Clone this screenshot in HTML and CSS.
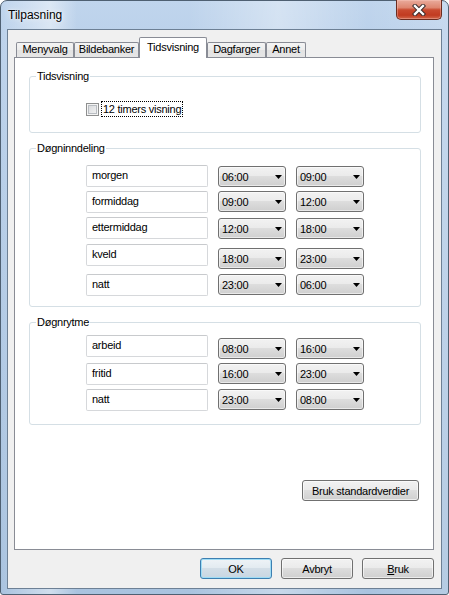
FILE: index.html
```html
<!DOCTYPE html>
<html lang="no">
<head>
<meta charset="utf-8">
<title>Tilpasning</title>
<link rel="stylesheet" href="styles.css">
</head>
<body>
<div class="window">
  <div class="titlebar">
    <span class="title">Tilpasning</span>
    <div class="close" aria-label="Lukk">
      <svg width="14" height="12" viewBox="0 0 14 12">
        <path d="M3 2 L11 10 M11 2 L3 10" stroke="#3a2b2b" stroke-width="4.4" stroke-linecap="square" fill="none"/>
        <path d="M3 2 L11 10 M11 2 L3 10" stroke="#ffffff" stroke-width="2.4" stroke-linecap="square" fill="none"/>
      </svg>
    </div>
  </div>
  <div class="frame">
    <div class="tabs">
      <div class="tab tab-meny">Menyvalg</div>
      <div class="tab tab-bilde">Bildebanker</div>
      <div class="tab tab-tid active">Tidsvisning</div>
      <div class="tab tab-dag">Dagfarger</div>
      <div class="tab tab-annet">Annet</div>
    </div>
    <div class="panel">
      <fieldset class="group group-first">
        <legend class="group-label">Tidsvisning</legend>
        <div class="check-row">
          <span class="checkbox"></span>
          <span class="check-label">12 timers visning</span>
        </div>
      </fieldset>

      <fieldset class="group">
        <legend class="group-label">Døgninndeling</legend>
        <div class="rows rows-day">
          <div class="row">
            <div class="field">morgen</div>
            <div class="combo off1"><span>06:00</span><svg class="arrow" width="7" height="4" viewBox="0 0 7 4"><path d="M0 0 H7 L3.5 4 Z" fill="#000"/></svg></div>
            <div class="combo off1"><span>09:00</span><svg class="arrow" width="7" height="4" viewBox="0 0 7 4"><path d="M0 0 H7 L3.5 4 Z" fill="#000"/></svg></div>
          </div>
          <div class="row">
            <div class="field">formiddag</div>
            <div class="combo"><span>09:00</span><svg class="arrow" width="7" height="4" viewBox="0 0 7 4"><path d="M0 0 H7 L3.5 4 Z" fill="#000"/></svg></div>
            <div class="combo"><span>12:00</span><svg class="arrow" width="7" height="4" viewBox="0 0 7 4"><path d="M0 0 H7 L3.5 4 Z" fill="#000"/></svg></div>
          </div>
          <div class="row">
            <div class="field">ettermiddag</div>
            <div class="combo off1"><span>12:00</span><svg class="arrow" width="7" height="4" viewBox="0 0 7 4"><path d="M0 0 H7 L3.5 4 Z" fill="#000"/></svg></div>
            <div class="combo off1"><span>18:00</span><svg class="arrow" width="7" height="4" viewBox="0 0 7 4"><path d="M0 0 H7 L3.5 4 Z" fill="#000"/></svg></div>
          </div>
          <div class="row row-shift">
            <div class="field">kveld</div>
            <div class="combo off4"><span>18:00</span><svg class="arrow" width="7" height="4" viewBox="0 0 7 4"><path d="M0 0 H7 L3.5 4 Z" fill="#000"/></svg></div>
            <div class="combo off4"><span>23:00</span><svg class="arrow" width="7" height="4" viewBox="0 0 7 4"><path d="M0 0 H7 L3.5 4 Z" fill="#000"/></svg></div>
          </div>
          <div class="row row-shift">
            <div class="field">natt</div>
            <div class="combo"><span>23:00</span><svg class="arrow" width="7" height="4" viewBox="0 0 7 4"><path d="M0 0 H7 L3.5 4 Z" fill="#000"/></svg></div>
            <div class="combo"><span>06:00</span><svg class="arrow" width="7" height="4" viewBox="0 0 7 4"><path d="M0 0 H7 L3.5 4 Z" fill="#000"/></svg></div>
          </div>
        </div>
      </fieldset>

      <fieldset class="group">
        <legend class="group-label">Døgnrytme</legend>
        <div class="rows rows-rhythm">
          <div class="row">
            <div class="field">arbeid</div>
            <div class="combo off3"><span>08:00</span><svg class="arrow" width="7" height="4" viewBox="0 0 7 4"><path d="M0 0 H7 L3.5 4 Z" fill="#000"/></svg></div>
            <div class="combo off3"><span>16:00</span><svg class="arrow" width="7" height="4" viewBox="0 0 7 4"><path d="M0 0 H7 L3.5 4 Z" fill="#000"/></svg></div>
          </div>
          <div class="row">
            <div class="field">fritid</div>
            <div class="combo"><span>16:00</span><svg class="arrow" width="7" height="4" viewBox="0 0 7 4"><path d="M0 0 H7 L3.5 4 Z" fill="#000"/></svg></div>
            <div class="combo"><span>23:00</span><svg class="arrow" width="7" height="4" viewBox="0 0 7 4"><path d="M0 0 H7 L3.5 4 Z" fill="#000"/></svg></div>
          </div>
          <div class="row">
            <div class="field">natt</div>
            <div class="combo"><span>23:00</span><svg class="arrow" width="7" height="4" viewBox="0 0 7 4"><path d="M0 0 H7 L3.5 4 Z" fill="#000"/></svg></div>
            <div class="combo"><span>08:00</span><svg class="arrow" width="7" height="4" viewBox="0 0 7 4"><path d="M0 0 H7 L3.5 4 Z" fill="#000"/></svg></div>
          </div>
        </div>
      </fieldset>

      <div class="defaults">
        <button class="btn btn-wide">Bruk standardverdier</button>
      </div>
    </div>
    <div class="actions">
      <button class="btn btn-default">OK</button>
      <button class="btn">Avbryt</button>
      <button class="btn"><u>B</u>ruk</button>
    </div>
  </div>
</div>
</body>
</html>
```
FILE: styles.css
```css
* { box-sizing: border-box; }

html, body {
  margin: 0;
  padding: 0;
}

body {
  width: 449px;
  height: 595px;
  overflow: hidden;
  background: #ffffff;
  font-family: "Liberation Sans", Arial, sans-serif;
  font-size: 11px;
  letter-spacing: -0.25px;
  color: #000;
}

.window {
  width: 449px;
  height: 595px;
  border: 1px solid #4f6072;
  border-radius: 7px 7px 3px 3px;
  display: flex;
  flex-direction: column;
  background:
    linear-gradient(to right,
      rgba(255,255,255,0) 0,
      rgba(255,255,255,0.45) 11%,
      rgba(255,255,255,0) 17%,
      rgba(255,255,255,0) 42%,
      rgba(255,255,255,0.35) 62%,
      rgba(255,255,255,0) 82%,
      rgba(255,255,255,0.15) 100%),
    linear-gradient(#c0d5ed 0, #bcd2eb 30px, #a9c3df 100%);
}

.titlebar {
  height: 28px;
  display: flex;
  align-items: flex-start;
  padding-left: 7px;
}

.title {
  font-size: 12px;
  line-height: 16px;
  margin-top: 6px;
  letter-spacing: 0;
  color: #000;
  text-shadow: 0 0 6px rgba(255,255,255,0.9), 0 0 2px rgba(255,255,255,0.8);
}

.close {
  margin-left: auto;
  margin-right: 6px;
  margin-top: -1px;
  width: 46px;
  height: 20px;
  border: 1px solid #6b2c20;
  border-top: none;
  border-radius: 0 0 5px 5px;
  background: linear-gradient(#e9ab9c 0%, #de8670 40%, #c94a2f 52%, #c13b21 80%, #d2684b 100%);
  box-shadow: inset 0 0 0 1px rgba(255, 210, 200, 0.35);
  display: flex;
  align-items: center;
  justify-content: center;
}

.frame {
  flex: 1;
  margin: 0 6px 5px;
  border: 1px solid #6d8095;
  background: #f0f0f0;
  display: flex;
  flex-direction: column;
  padding: 7px 7px 9px 6px;
}

.tabs {
  display: flex;
  align-items: flex-end;
  height: 20px;
  padding-left: 2px;
}

.tab {
  height: 15px;
  border: 1px solid #898c95;
  border-bottom: none;
  border-radius: 2px 2px 0 0;
  background: linear-gradient(#f4f4f4 0%, #ececec 50%, #e2e2e2 51%, #e6e6e6 100%);
  line-height: 13px;
  text-align: center;
  white-space: nowrap;
}

.tab-meny { width: 58px; }
.tab-bilde { width: 65px; }
.tab-tid { width: 68px; }
.tab-dag { width: 59px; }
.tab-annet { width: 40px; }

.tab.active {
  height: 21px;
  line-height: 18px;
  background: #ffffff;
  margin-bottom: -1px;
  position: relative;
  z-index: 1;
}

.panel {
  flex: 1;
  border: 1px solid #898c95;
  background: #ffffff;
  display: flex;
  flex-direction: column;
}

.group {
  margin: 8px 12px 0 14px;
  padding: 0;
  border: 1px solid #d5dfe5;
  border-radius: 3px;
  min-width: 0;
}

.group-first {
  margin-top: 11px;
}

.group-label {
  margin-left: 6px;
  padding: 0 1px;
  font-size: 11px;
  line-height: 15px;
}

.check-row {
  display: flex;
  align-items: center;
  padding: 17px 0 15px 56px;
}

.checkbox {
  width: 13px;
  height: 13px;
  border: 1px solid #8e8f8f;
  background: linear-gradient(135deg, #d4d6d9 0%, #f6f6f6 100%);
  box-shadow: inset 0 0 0 1px #f4f4f4, inset 0 0 0 2px #b9bdc2;
}

.check-label {
  margin-left: 2px;
  border: 1px dotted #000;
  padding: 0 1px;
  line-height: 14px;
}

.rows {
  display: flex;
  flex-direction: column;
  gap: 4px;
  padding-left: 56px;
}

.rows-day {
  padding-top: 9px;
  padding-bottom: 10px;
}

.rows-rhythm {
  padding-top: 5px;
  padding-bottom: 13px;
}

.row {
  display: flex;
  align-items: flex-start;
  gap: 10px;
}

.row-shift {
  margin-top: 1px;
}

.field {
  width: 122px;
  height: 22px;
  border: 1px solid #d6d8db;
  border-top-color: #c8cacd;
  border-radius: 2px;
  padding: 2px 5px;
  line-height: 15px;
  background: #fff;
}

.combo {
  width: 68px;
  height: 21px;
  border: 1px solid #707070;
  border-radius: 3px;
  background: linear-gradient(#f2f2f2 0%, #ebebeb 45%, #dddddd 50%, #cfcfcf 100%);
  box-shadow: inset 0 0 0 1px rgba(255,255,255,0.55);
  display: flex;
  align-items: center;
  padding: 0 3px;
  line-height: 14px;
}

.combo .arrow {
  margin-left: auto;
}

.off1 { margin-top: 1px; }
.off3 { margin-top: 3px; }
.off4 { margin-top: 4px; }

.defaults {
  display: flex;
  justify-content: flex-end;
  margin: 55px 14px 0 0;
}

.btn {
  width: 72px;
  height: 21px;
  padding: 0;
  border: 1px solid #707070;
  border-radius: 3px;
  background: linear-gradient(#f2f2f2 0%, #ebebeb 45%, #dddddd 50%, #cfcfcf 100%);
  box-shadow: inset 0 0 0 1px rgba(255,255,255,0.6);
  font-family: "Liberation Sans", Arial, sans-serif;
  font-size: 11px;
  letter-spacing: -0.25px;
  color: #000;
  line-height: 14px;
}

.btn-wide {
  width: 117px;
}

.btn-default {
  border-color: #3c7fb1;
  background: linear-gradient(#eef3f7 0%, #e3ebf1 45%, #d3dee7 50%, #c8d6e2 100%);
  box-shadow: inset 0 0 0 1px #9fdcf5;
}

.actions {
  display: flex;
  justify-content: flex-end;
  gap: 9px;
  margin-top: 8px;
}
```
